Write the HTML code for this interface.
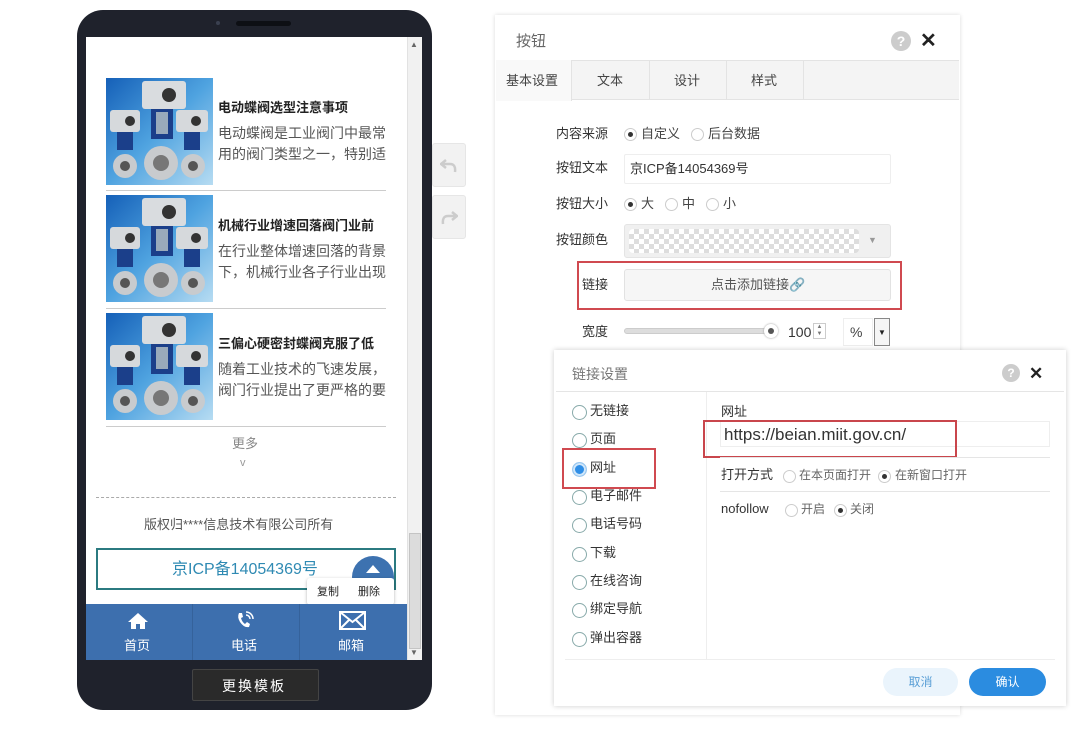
<!DOCTYPE html>
<html><head><meta charset="utf-8">
<style>
*{margin:0;padding:0;box-sizing:border-box}
body{width:1088px;height:730px;background:#fff;position:relative;overflow:hidden;font-family:"Liberation Sans","Noto Sans CJK SC",sans-serif;color:#333}
.a{position:absolute}
.t{position:absolute;white-space:nowrap;line-height:1.15}
.radio{position:absolute;width:13px;height:13px;border:1px solid #ccc;border-radius:50%;background:#fff}
.radio.on::after{content:"";position:absolute;left:3px;top:3px;width:5px;height:5px;border-radius:50%;background:#333}
.lr{position:absolute;width:15px;height:15px;border:1px solid #8aa;border-radius:50%;background:#fff}
</style></head><body>
<svg width="0" height="0" style="position:absolute">
<defs>
<linearGradient id="bg" x1="0" y1="0" x2="1" y2="1"><stop offset="0" stop-color="#1560b8"/><stop offset="0.5" stop-color="#4fa3e0"/><stop offset="1" stop-color="#b7dcf2"/></linearGradient>
<symbol id="valve" viewBox="0 0 107 107">
<rect width="107" height="107" fill="url(#bg)"/>
<rect x="36" y="3" width="44" height="28" rx="3" fill="#d9dcdf"/><circle cx="63" cy="17" r="7" fill="#333"/>
<rect x="4" y="32" width="30" height="22" rx="3" fill="#d6d9dc"/><circle cx="24" cy="43" r="5" fill="#333"/>
<rect x="70" y="32" width="32" height="22" rx="3" fill="#d6d9dc"/><circle cx="90" cy="43" r="5" fill="#333"/>
<rect x="45" y="31" width="22" height="30" fill="#1b3f8a"/><rect x="50" y="34" width="12" height="22" fill="#9ab"/>
<rect x="11" y="54" width="16" height="18" fill="#1b3f8a"/><rect x="78" y="54" width="16" height="18" fill="#1b3f8a"/>
<circle cx="55" cy="85" r="17" fill="#c8cbce"/><circle cx="55" cy="85" r="8" fill="#777"/>
<circle cx="19" cy="88" r="12" fill="#c8cbce"/><circle cx="19" cy="88" r="5" fill="#555"/>
<circle cx="87" cy="88" r="12" fill="#c8cbce"/><circle cx="87" cy="88" r="5" fill="#555"/>
</symbol>
</defs></svg>

<!-- phone -->
<div class="a" style="left:77px;top:10px;width:355px;height:700px;background:#1f222c;border-radius:26px"></div>
<div class="a" style="left:216px;top:21px;width:4px;height:4px;border-radius:50%;background:#3a4050"></div>
<div class="a" style="left:236px;top:21px;width:55px;height:5px;border-radius:3px;background:#0d0f14"></div>
<div class="a" style="left:86px;top:37px;width:336px;height:623px;background:#fff"></div>
<!-- scrollbar -->
<div class="a" style="left:407px;top:37px;width:15px;height:623px;background:#f1f1f1;border-left:1px solid #e2e2e2"></div>
<div class="a" style="left:409px;top:533px;width:12px;height:116px;background:#dcdcdc;border:1px solid #c4c4c4"></div>
<div class="t" style="left:410px;top:40px;font-size:8px;color:#666">▲</div>
<div class="t" style="left:410px;top:648px;font-size:8px;color:#666">▼</div>

<!-- list -->
<svg class="a" style="left:106px;top:78px" width="107" height="107"><use href="#valve"/></svg>
<svg class="a" style="left:106px;top:195px" width="107" height="107"><use href="#valve"/></svg>
<svg class="a" style="left:106px;top:313px" width="107" height="107"><use href="#valve"/></svg>
<div class="t" style="left:218px;top:101px;font-size:13px;font-weight:bold;color:#222">电动蝶阀选型注意事项</div>
<div class="t" style="left:218px;top:123px;font-size:14px;color:#555;line-height:21px">电动蝶阀是工业阀门中最常<br>用的阀门类型之一，特别适</div>
<div class="a" style="left:106px;top:190px;width:280px;height:1px;background:#ccc"></div>
<div class="t" style="left:218px;top:219px;font-size:13px;font-weight:bold;color:#222">机械行业增速回落阀门业前</div>
<div class="t" style="left:218px;top:241px;font-size:14px;color:#555;line-height:21px">在行业整体增速回落的背景<br>下，机械行业各子行业出现</div>
<div class="a" style="left:106px;top:308px;width:280px;height:1px;background:#ccc"></div>
<div class="t" style="left:218px;top:337px;font-size:13px;font-weight:bold;color:#222">三偏心硬密封蝶阀克服了低</div>
<div class="t" style="left:218px;top:359px;font-size:14px;color:#555;line-height:21px">随着工业技术的飞速发展，<br>阀门行业提出了更严格的要</div>
<div class="a" style="left:106px;top:426px;width:280px;height:1px;background:#ccc"></div>
<div class="t" style="left:232px;top:437px;font-size:13px;color:#888">更多</div>
<div class="t" style="left:240px;top:457px;font-size:11px;color:#999">v</div>
<div class="a" style="left:96px;top:497px;width:300px;border-top:1px dashed #aaa"></div>
<div class="t" style="left:144px;top:518px;font-size:13px;color:#555">版权归****信息技术有限公司所有</div>
<div class="a" style="left:96px;top:548px;width:300px;height:42px;border:2px solid #2b7a80"></div>
<div class="t" style="left:172px;top:561px;font-size:16px;color:#2f8ab3">京ICP备14054369号</div>
<div class="a" style="left:352px;top:556px;width:42px;height:42px;border-radius:50%;background:#3d72b0"></div>
<div class="a" style="left:366px;top:565px;width:0;height:0;border-left:7px solid transparent;border-right:7px solid transparent;border-bottom:8px solid #fff"></div>
<div class="a" style="left:307px;top:578px;width:87px;height:27px;background:#fff;border-radius:3px;box-shadow:0 1px 3px rgba(0,0,0,.3)"></div>
<div class="t" style="left:317px;top:586px;font-size:11px;color:#222">复制</div>
<div class="t" style="left:358px;top:586px;font-size:11px;color:#222">删除</div>

<!-- nav -->
<div class="a" style="left:86px;top:604px;width:321px;height:56px;background:#3d6fae"></div>
<div class="a" style="left:192px;top:604px;width:1px;height:56px;background:#35629b"></div>
<div class="a" style="left:299px;top:604px;width:1px;height:56px;background:#35629b"></div>
<svg class="a" style="left:127px;top:612px" width="22" height="18" viewBox="0 0 22 18"><path d="M11 1 L1 10 L4 10 L4 17 L9 17 L9 12 L13 12 L13 17 L18 17 L18 10 L21 10 Z" fill="#fff"/></svg>
<svg class="a" style="left:235px;top:611px" width="20" height="20" viewBox="0 0 20 20"><path d="M4 2 L7 2 L8 6 L6 7 Q7 11 10 13 L12 11 L15 13 L14 16 Q9 17 5 11 Q2 6 4 2Z" fill="#fff"/><path d="M11 4 a4 4 0 0 1 4 4 M11 1 a7 7 0 0 1 7 7" stroke="#fff" stroke-width="1.5" fill="none"/></svg>
<svg class="a" style="left:339px;top:611px" width="27" height="19" viewBox="0 0 27 19"><rect x="1" y="1" width="25" height="17" fill="none" stroke="#fff" stroke-width="2"/><path d="M1 1 L13.5 11 L26 1 M1 18 L10 9 M26 18 L17 9" stroke="#fff" stroke-width="2" fill="none"/></svg>
<div class="t" style="left:124px;top:639px;font-size:13px;color:#fff">首页</div>
<div class="t" style="left:231px;top:639px;font-size:13px;color:#fff">电话</div>
<div class="t" style="left:338px;top:639px;font-size:13px;color:#fff">邮箱</div>
<div class="a" style="left:192px;top:669px;width:127px;height:32px;background:#2a2a2a;border:1px solid #444;border-radius:2px"></div>
<div class="t" style="left:222px;top:678px;font-size:14px;color:#fff;letter-spacing:2px">更换模板</div>

<!-- undo/redo -->
<div class="a" style="left:432px;top:143px;width:34px;height:44px;background:#f2f2f2;border:1px solid #e6e6e6;border-radius:3px"></div>
<div class="a" style="left:432px;top:195px;width:34px;height:44px;background:#f2f2f2;border:1px solid #e6e6e6;border-radius:3px"></div>
<svg class="a" style="left:440px;top:158px" width="18" height="16" viewBox="0 0 18 16"><path d="M6 2 L1 6 L6 10 M1 6 L10 6 Q16 6 15 14" stroke="#ccc" stroke-width="2.5" fill="none"/></svg>
<svg class="a" style="left:440px;top:210px" width="18" height="16" viewBox="0 0 18 16"><path d="M12 2 L17 6 L12 10 M17 6 L8 6 Q2 6 3 14" stroke="#ccc" stroke-width="2.5" fill="none"/></svg>

<!-- dialog 1 -->
<div class="a" style="left:495px;top:15px;width:465px;height:700px;background:#fff;box-shadow:0 0 4px rgba(0,0,0,.15)"></div>
<div class="t" style="left:516px;top:33px;font-size:15px;color:#666">按钮</div>
<div class="a" style="left:891px;top:31px;width:20px;height:20px;border-radius:50%;background:#ccc;color:#fff;font-size:14px;font-weight:bold;text-align:center;line-height:20px">?</div>
<div class="t" style="left:920px;top:30px;font-size:20px;font-weight:bold;color:#222">✕</div>
<div class="a" style="left:496px;top:60px;width:463px;height:40px;background:#f4f4f4;border-top:1px solid #e3e3e3;border-bottom:1px solid #e3e3e3"></div>
<div class="a" style="left:496px;top:60px;width:76px;height:41px;background:#f9f9f9;border-right:1px solid #e3e3e3"></div>
<div class="a" style="left:649px;top:61px;width:1px;height:39px;background:#e3e3e3"></div>
<div class="a" style="left:726px;top:61px;width:1px;height:39px;background:#e3e3e3"></div>
<div class="a" style="left:803px;top:61px;width:1px;height:39px;background:#e3e3e3"></div>
<div class="t" style="left:506px;top:74px;font-size:13px;color:#444">基本设置</div>
<div class="t" style="left:597px;top:74px;font-size:13px;color:#444">文本</div>
<div class="t" style="left:674px;top:74px;font-size:13px;color:#444">设计</div>
<div class="t" style="left:751px;top:74px;font-size:13px;color:#444">样式</div>

<div class="t" style="left:556px;top:127px;font-size:13px;color:#333">内容来源</div>
<div class="radio on" style="left:624px;top:128px"></div><div class="t" style="left:641px;top:127px;font-size:13px;color:#444">自定义</div>
<div class="radio" style="left:691px;top:128px"></div><div class="t" style="left:708px;top:127px;font-size:13px;color:#444">后台数据</div>
<div class="t" style="left:556px;top:161px;font-size:13px;color:#333">按钮文本</div>
<div class="a" style="left:624px;top:154px;width:267px;height:30px;border:1px solid #eee;border-radius:2px"></div>
<div class="t" style="left:630px;top:162px;font-size:13px;color:#333">京ICP备14054369号</div>
<div class="t" style="left:556px;top:197px;font-size:13px;color:#333">按钮大小</div>
<div class="radio on" style="left:624px;top:198px"></div><div class="t" style="left:641px;top:197px;font-size:13px;color:#444">大</div>
<div class="radio" style="left:665px;top:198px"></div><div class="t" style="left:682px;top:197px;font-size:13px;color:#444">中</div>
<div class="radio" style="left:706px;top:198px"></div><div class="t" style="left:723px;top:197px;font-size:13px;color:#444">小</div>
<div class="t" style="left:556px;top:233px;font-size:13px;color:#333">按钮颜色</div>
<div class="a" style="left:624px;top:224px;width:267px;height:34px;background:#f0f0f0;border:1px solid #e4e4e4;border-radius:3px"></div>
<div class="a" style="left:629px;top:229px;width:230px;height:24px;border-radius:4px;background-color:#fff;background-image:linear-gradient(45deg,#ddd 25%,transparent 25%,transparent 75%,#ddd 75%),linear-gradient(45deg,#ddd 25%,transparent 25%,transparent 75%,#ddd 75%);background-size:10px 10px;background-position:0 0,5px 5px"></div>
<div class="t" style="left:868px;top:235px;font-size:9px;color:#999">▼</div>
<div class="a" style="left:577px;top:261px;width:325px;height:49px;border:2px solid #d04a50"></div>
<div class="t" style="left:582px;top:278px;font-size:13px;color:#333">链接</div>
<div class="a" style="left:624px;top:269px;width:267px;height:32px;background:#f6f6f6;border:1px solid #e2e2e2;border-radius:3px"></div>
<div class="t" style="left:711px;top:278px;font-size:13px;color:#555">点击添加链接🔗</div>
<div class="t" style="left:582px;top:325px;font-size:13px;color:#333">宽度</div>
<div class="a" style="left:624px;top:328px;width:148px;height:6px;background:#ddd;border-radius:3px;border:1px solid #ccc"></div>
<div class="a" style="left:764px;top:324px;width:14px;height:14px;border-radius:50%;background:#fff;box-shadow:0 0 2px #999"></div>
<div class="a" style="left:768px;top:328px;width:6px;height:6px;border-radius:50%;background:#555"></div>
<div class="t" style="left:788px;top:324px;font-size:14px;color:#333">100</div>
<div class="a" style="left:813px;top:323px;width:13px;height:16px;border:1px solid #ccc;font-size:6px;color:#777;text-align:center;line-height:7px">▲<br>▼</div>
<div class="a" style="left:843px;top:318px;width:30px;height:28px;border:1px solid #eee"></div>
<div class="t" style="left:850px;top:324px;font-size:14px;color:#444">%</div>
<div class="a" style="left:874px;top:318px;width:16px;height:28px;border:1px solid #888;background:#f5f5f5;font-size:8px;text-align:center;line-height:28px;color:#222">▼</div>

<!-- dialog 2 -->
<div class="a" style="left:554px;top:350px;width:512px;height:356px;background:#fff;box-shadow:0 0 5px rgba(0,0,0,.2)"></div>
<div class="t" style="left:572px;top:366px;font-size:14px;color:#777">链接设置</div>
<div class="a" style="left:1002px;top:364px;width:18px;height:18px;border-radius:50%;background:#ccc;color:#fff;font-size:12px;font-weight:bold;text-align:center;line-height:18px">?</div>
<div class="t" style="left:1029px;top:364px;font-size:17px;font-weight:bold;color:#222">✕</div>
<div class="a" style="left:556px;top:391px;width:508px;height:1px;background:#e5e5e5"></div>
<div class="a" style="left:706px;top:392px;width:1px;height:268px;background:#eee"></div>
<div class="a" style="left:565px;top:659px;width:490px;height:1px;background:#eee"></div>

<div class="lr" style="left:572px;top:405px"></div><div class="t" style="left:590px;top:404px;font-size:13px;color:#333">无链接</div>
<div class="lr" style="left:572px;top:433px"></div><div class="t" style="left:590px;top:432px;font-size:13px;color:#333">页面</div>
<div class="lr" style="left:572px;top:462px;border-color:#9cc8ee;background:#2f8ee6;box-shadow:inset 0 0 0 2px #cfe6fa"></div><div class="t" style="left:590px;top:461px;font-size:13px;color:#333">网址</div>
<div class="lr" style="left:572px;top:490px"></div><div class="t" style="left:590px;top:489px;font-size:13px;color:#333">电子邮件</div>
<div class="lr" style="left:572px;top:518px"></div><div class="t" style="left:590px;top:517px;font-size:13px;color:#333">电话号码</div>
<div class="lr" style="left:572px;top:547px"></div><div class="t" style="left:590px;top:546px;font-size:13px;color:#333">下载</div>
<div class="lr" style="left:572px;top:575px"></div><div class="t" style="left:590px;top:574px;font-size:13px;color:#333">在线咨询</div>
<div class="lr" style="left:572px;top:603px"></div><div class="t" style="left:590px;top:602px;font-size:13px;color:#333">绑定导航</div>
<div class="lr" style="left:572px;top:632px"></div><div class="t" style="left:590px;top:631px;font-size:13px;color:#333">弹出容器</div>
<div class="a" style="left:562px;top:448px;width:94px;height:41px;border:2px solid #d04a50"></div>

<div class="t" style="left:721px;top:405px;font-size:13px;color:#333">网址</div>
<div class="a" style="left:720px;top:421px;width:330px;height:26px;border:1px solid #eee"></div>
<div class="t" style="left:724px;top:425px;font-size:17px;color:#333">https://beian.miit.gov.cn/</div>
<div class="a" style="left:703px;top:420px;width:254px;height:38px;border:2px solid #c9464c"></div>
<div class="a" style="left:720px;top:457px;width:330px;height:1px;background:#e5e5e5"></div>
<div class="t" style="left:721px;top:468px;font-size:13px;color:#333">打开方式</div>
<div class="radio" style="left:783px;top:470px"></div><div class="t" style="left:799px;top:469px;font-size:12px;color:#666">在本页面打开</div>
<div class="radio on" style="left:878px;top:470px"></div><div class="t" style="left:895px;top:469px;font-size:12px;color:#666">在新窗口打开</div>
<div class="a" style="left:720px;top:491px;width:330px;height:1px;background:#e5e5e5"></div>
<div class="t" style="left:721px;top:502px;font-size:13px;color:#333">nofollow</div>
<div class="radio" style="left:785px;top:504px"></div><div class="t" style="left:801px;top:503px;font-size:12px;color:#666">开启</div>
<div class="radio on" style="left:834px;top:504px"></div><div class="t" style="left:850px;top:503px;font-size:12px;color:#666">关闭</div>

<div class="a" style="left:883px;top:668px;width:75px;height:28px;border-radius:14px;background:#eaf4fc;color:#5a9fd6;font-size:12px;text-align:center;line-height:28px">取消</div>
<div class="a" style="left:969px;top:668px;width:77px;height:28px;border-radius:14px;background:#2b8ce0;color:#fff;font-size:12px;text-align:center;line-height:28px">确认</div>
</body></html>
